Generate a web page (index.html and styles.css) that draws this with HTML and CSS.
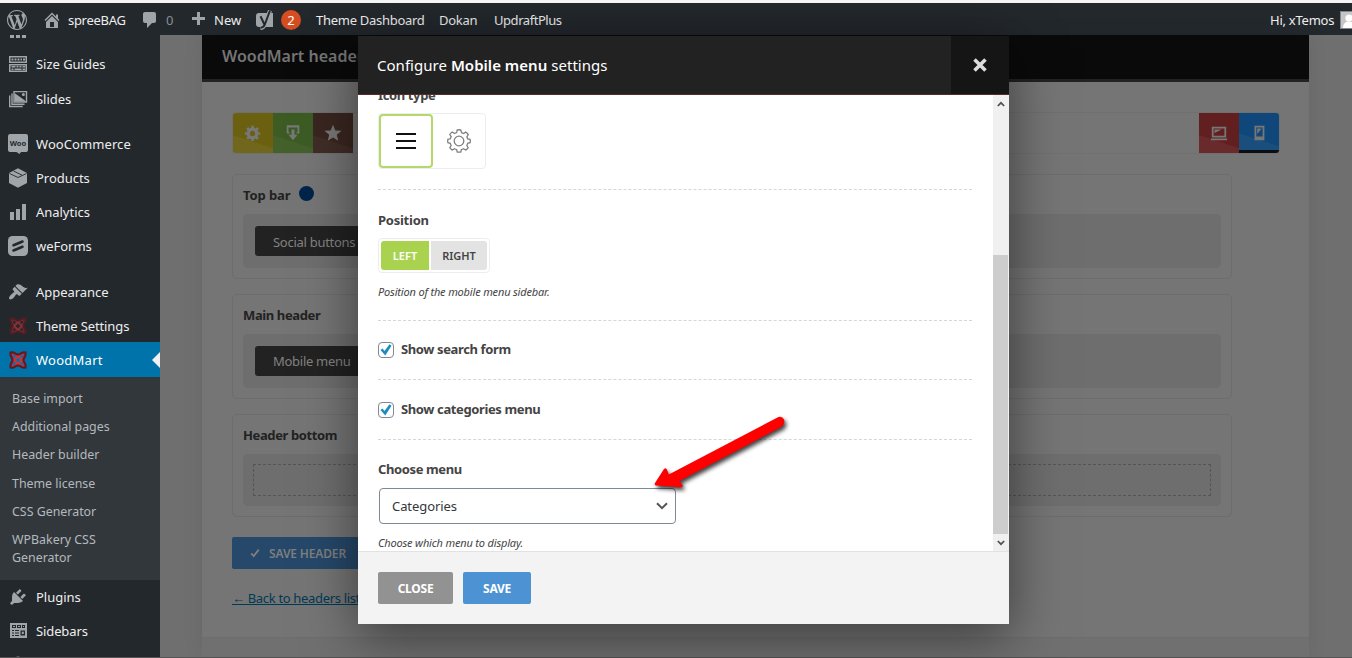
FILE: index.html
```
<!DOCTYPE html>
<html lang="en">
<head>
<meta charset="utf-8">
<title>Header builder</title>
<link rel="stylesheet" href="styles.css">
</head>
<body>
<div class="screen">
  <header class="adminbar">
    <svg class="ab-logo" viewBox="0 0 20 20"><path d="M20 10c0-5.51-4.49-10-10-10C4.48 0 0 4.49 0 10c0 5.52 4.48 10 10 10 5.51 0 10-4.48 10-10zM7.78 15.37L4.37 6.22c.55-.02 1.17-.08 1.17-.08.5-.06.44-1.13-.06-1.11 0 0-1.45.11-2.37.11-.18 0-.37 0-.58-.01C4.12 2.69 6.87 1.11 10 1.11c2.33 0 4.45.87 6.05 2.34-.68-.11-1.65.39-1.65 1.58 0 .74.45 1.36.9 2.1.35.61.55 1.36.55 2.46 0 1.49-1.4 5-1.4 5l-3.03-8.37c.54-.02.82-.17.82-.17.5-.05.44-1.25-.06-1.22 0 0-1.44.12-2.38.12-.87 0-2.33-.12-2.33-.12-.5-.03-.56 1.2-.06 1.22l.92.08 1.26 3.41zM17.41 10c.24-.64.74-1.87.43-4.25.7 1.29 1.05 2.71 1.05 4.25 0 3.29-1.73 6.24-4.4 7.78.97-2.59 1.94-5.2 2.92-7.78zM6.1 18.09C3.12 16.65 1.11 13.53 1.11 10c0-1.3.23-2.48.72-3.59C3.25 10.3 4.67 14.2 6.1 18.09zm4.03-6.63l2.58 6.98c-.86.29-1.76.45-2.71.45-.79 0-1.57-.11-2.29-.33.81-2.38 1.62-4.74 2.42-7.1z"/></svg>
    <div class="ab-item ab-site"><svg viewBox="0 0 20 20"><path d="M16 8.500l1.530 1.530-1.060 1.060L10 4.600l-6.470 6.490-1.060-1.060L10 2.500l4 4v-2h2v4zm-6-2.460l6 5.990V18H4v-5.970zM12 17v-5H8v5h4z"/></svg><span>spreeBAG</span></div>
    <div class="ab-item ab-comments"><svg viewBox="0 0 20 20"><path d="M5 2h9c1.100 0 2 .9 2 2v7c0 1.100-.9 2-2 2h-2l-5 5v-5H5c-1.100 0-2-.9-2-2V4c0-1.100.9-2 2-2z"/></svg><span class="dim">0</span></div>
    <div class="ab-item ab-new"><svg viewBox="0 0 20 20"><path d="M17 7v3h-5v5H9v-5H4V7h5V2h3v5h5z"/></svg><span>New</span></div>
    <div class="ab-item ab-yoast"><svg viewBox="0 0 20 20"><path d="M4 3h14v14H4a3 3 0 0 1-3-3V6a3 3 0 0 1 3-3z"/><path class="halo" d="M15 0.500l-5 13.500c-.9 2.600-2 4-4.500 4"/><path class="y" d="M5.500 6.200l3.800 8M15 .5l-5 13.500c-.9 2.600-2 3.700-4.200 3.700"/></svg><span class="badge">2</span></div>
    <span class="ab-link l1">Theme Dashboard</span>
    <span class="ab-link l2">Dokan</span>
    <span class="ab-link l3">UpdraftPlus</span>
    <div class="ab-user"><span>Hi, xTemos</span><span class="avatar"><svg viewBox="0 0 16 16"><circle cx="8" cy="6" r="3.600"/><path d="M2 16c0-5 3-6.500 6-6.500s6 1.500 6 6.500z"/></svg></span></div>
  </header>

  <div class="layout">
    <nav class="sidebar">
      <div class="dots"><i></i><i></i><i></i></div>
      <a class="item"><svg viewBox="0 0 20 20"><path d="M1 2h18v7H1zM1 10h18v8H1z"/><path class="cut" d="M2.500 3.500h15v4h-15zM2.500 11.500h15v5h-15z"/><path d="M3.500 4.500h2v2h-2zM6.500 4.500h2v2h-2zM9.500 4.500h2v2h-2zM12.500 4.500h1.500v2h-1.500zM15 4.500h2v2h-2zM3.500 12h4v1.500h-4zM8.500 12h2v1.500h-2zM11.500 12h2v1.500h-2zM14.500 12H17v1.500h-2.500zM3.500 14.500h2V16h-2zM6.500 14.500h7V16h-7zM14.500 14.500H17V16h-2.500z"/></svg>Size Guides</a>
      <a class="item tall"><svg viewBox="0 0 20 20"><g class="line"><path d="M6 2.600h12.500V13H6zM4 4.500v10.700h12.500M1.700 6.500v11h13"/></g><circle cx="15.400" cy="5.600" r="1.500"/><path d="M6.500 4l10.500 7.500v1H6.500z"/></svg>Slides</a>
      <a class="item gap11"><svg viewBox="0 0 20 20"><path d="M2 0h16a2 2 0 0 1 2 2v14a2 2 0 0 1-2 2h-5l-1.500 2-3-2H2a2 2 0 0 1-2-2V2a2 2 0 0 1 2-2z"/><text x="10" y="12" text-anchor="middle" class="woo">Woo</text></svg><span class="wide">WooCommerce</span></a>
      <a class="item"><svg viewBox="0 0 20 20"><path d="M10 .3l9 4.700v10L10 19.700 1 15V5z"/><path class="cutline" d="M1.500 5.500L10 9.500l8.500-4M5.500 3L14 7.200"/></svg>Products</a>
      <a class="item"><svg viewBox="0 0 20 20"><path d="M2 10h4v8H2zM8 7h4v11H8zM14 2h4v16h-4z"/></svg>Analytics</a>
      <a class="item"><svg viewBox="0 0 20 20"><rect width="20" height="20" rx="4.500"/><path class="thick" d="M5.500 9.200L14.500 5.500M5.500 14.500l9-3.700"/></svg>weForms</a>
      <a class="item gap12"><svg viewBox="0 0 20 20"><path d="M14.480 11.060L7.410 3.990l1.500-1.500c.5-.56 2.300-.47 3.510.32 1.210.8 1.430 1.280 2.910 2.100 1.180.64 2.450 1.260 4.450.85zm-.71.71L6.700 4.700 4.930 6.470c-.39.39-.39 1.020 0 1.410l1.060 1.060c.39.39.39 1.030 0 1.420-.6.6-1.430 1.110-2.210 1.690-.35.26-.7.53-1.010.84C1.430 14.230.4 16.080 1.400 17.070c.99 1 2.840-.03 4.180-1.360.31-.31.58-.66.85-1.020.57-.78 1.080-1.610 1.690-2.210.39-.39 1.020-.39 1.410 0l1.060 1.060c.39.39 1.020.39 1.410 0z"/></svg>Appearance</a>
      <a class="item short"><svg class="wood faded" viewBox="0 0 20 20"><g class="x"><ellipse cx="10" cy="10" rx="9" ry="2.800" transform="rotate(45 10 10)"/><ellipse cx="10" cy="10" rx="9" ry="2.800" transform="rotate(-45 10 10)"/></g><path d="M2.500 2.500c4-1 4.500 2 7.500 2s3.500-3 7.500-2c1 4-2 4.500-2 7.500s3 3.500 2 7.500c-4 1-4.500-2-7.500-2s-3.500 3-7.500 2c-1-4 2-4.500 2-7.500s-3-3.500-2-7.500z"/></svg><span class="narrow">Theme Settings</span></a>
      <a class="item active"><svg class="wood" viewBox="0 0 20 20"><g class="x"><ellipse cx="10" cy="10" rx="9" ry="2.800" transform="rotate(45 10 10)"/><ellipse cx="10" cy="10" rx="9" ry="2.800" transform="rotate(-45 10 10)"/></g><path d="M2.500 2.500c4-1 4.500 2 7.500 2s3.500-3 7.500-2c1 4-2 4.500-2 7.500s3 3.500 2 7.500c-4 1-4.500-2-7.500-2s-3.500 3-7.500 2c-1-4 2-4.500 2-7.500s-3-3.500-2-7.500z"/></svg><span class="wider">WoodMart</span></a>
      <div class="submenu">
        <a>Base import</a><a>Additional pages</a><a>Header builder</a><a>Theme license</a><a>CSS Generator</a><a>WPBakery CSS Generator</a>
      </div>
      <a class="item"><svg viewBox="0 0 20 20"><path d="M13.110 4.360L9.870 7.600 8 5.730l3.240-3.240c.35-.34 1.050-.2 1.560.32.52.51.66 1.210.31 1.550zm-8 1.770l.91-1.120 9.010 9.010-1.190.84c-.71.71-2.630 1.160-3.820 1.160H6.140L4.900 17.260c-.59.59-1.540.59-2.120 0-.59-.58-.59-1.530 0-2.120l1.240-1.240v-3.880c0-1.130.4-3.190 1.090-3.890zm7.260 3.970l3.240-3.240c.34-.35 1.040-.21 1.550.31.52.51.66 1.210.31 1.550l-3.240 3.250z"/></svg>Plugins</a>
      <a class="item"><svg viewBox="0 0 20 20"><path d="M2 2h17v15H2z"/><path class="cut" d="M4 4h4v3H4zM9 4h4v3H9zM14 4h3v3h-3zM4 9h2v1H4zM7 9h4v1H7zM4 11.500h2v1H4zM7 11.500h4v1H7zM4 14h2v1H4zM7 14h4v1H7zM12.500 9.500H17v5h-4.500z"/><path d="M5 5h2v1H5zM10 5h2v1h-2zM15 5h1v1h-1zM13.800 10.800h2v2.200h-2z"/></svg><span class="narrow">Sidebars</span></a>
      <a class="item"><svg viewBox="0 0 20 20"><circle cx="10" cy="5" r="3.500"/></svg></a>
    </nav>

    <main class="content">
      <section class="panel">
        <h1 class="panel-title">WoodMart header builder</h1>
        <div class="panel-body">
          <div class="toolbar">
            <span class="tool yellow"><svg viewBox="0 0 20 20"><path d="M18 12h-2.180c-.17.7-.44 1.350-.81 1.930l1.540 1.540-2.100 2.100-1.540-1.540c-.58.36-1.230.63-1.910.79V19H8v-2.180c-.68-.16-1.330-.43-1.910-.79l-1.540 1.540-2.120-2.120 1.540-1.540c-.36-.58-.63-1.230-.79-1.910H1V9.030h2.170c.16-.7.44-1.350.8-1.940L2.430 5.550l2.100-2.100 1.540 1.540c.58-.37 1.240-.64 1.930-.81V2h3v2.180c.68.16 1.330.43 1.910.79l1.540-1.540 2.120 2.120-1.540 1.540c.36.59.64 1.240.8 1.940H18V12zm-8.500 1.500c1.660 0 3-1.340 3-3s-1.340-3-3-3-3 1.340-3 3 1.340 3 3 3z"/></svg></span>
            <span class="tool green"><svg viewBox="0 0 20 20"><path d="M3 1.500h14v9h-3V9h1V4H5v5h1v1.500H3zM8.300 6h3.400v6H15l-5 6-5-6h3.300z"/></svg></span>
            <span class="tool brown"><svg viewBox="0 0 20 20"><path d="M10 .8l2.600 6.300 6.900.5-5.300 4.300 1.700 6.700-5.900-3.700-5.900 3.700 1.700-6.700L.5 7.600l6.900-.5z"/></svg></span>
            <span class="tool red"><svg viewBox="0 0 20 20"><path fill-rule="evenodd" d="M2 3h16v12H2zm2 2v8h12V5zM1 16h18v2H1z"/><path d="M5 6h8l-8 4z"/></svg></span>
            <span class="tool blue"><svg viewBox="0 0 20 20"><path fill-rule="evenodd" d="M5 2h11v16H5zm2 2v10h7V4z"/><path d="M8 5h5l-5 6z"/></svg></span>
          </div>
          <div class="rows">
            <div class="row"><h2>Top bar<i class="dot"></i></h2><div class="slot"><span class="chip low">Social buttons</span></div></div>
            <div class="row"><h2>Main header</h2><div class="slot"><span class="chip">Mobile menu</span></div></div>
            <div class="row"><h2>Header bottom</h2><div class="slot last"><div class="drop"></div></div></div>
          </div>
          <div class="save-header"><svg viewBox="0 0 12 12"><path d="M1.500 6.500l3 3.200L10.500 2"/></svg>SAVE HEADER</div>
          <a class="back">← Back to headers list</a>
        </div>
        <div class="panel-foot"></div>
      </section>
    </main>
  </div>
  <div class="edge"></div>

  <section class="modal">
    <header class="modal-head"><h3>Configure <b>Mobile menu</b> settings</h3><span class="modal-x"><svg viewBox="0 0 14 14"><path d="M1.500 1.500l11 11M12.500 1.500l-11 11"/></svg></span></header>
    <div class="modal-body">
      <div class="fields">
        <div class="field f-icon"><h4>Icon type</h4>
          <div class="icons">
            <span class="ic on"><svg viewBox="0 0 20 20"><path d="M0 3h20M0 10h20M0 17h20"/></svg></span>
            <span class="ic"><svg class="gear" viewBox="0 0 24 24"><circle cx="12" cy="12" r="4.800"/><path d="M10.200 1q1.800-.5 3.600 0l.7 2.600q1.200.5 2 .9l2.300-1.400q1.600.9 2.500 2.500l-1.400 2.200q.6 1 .8 2.100l2.400.4q.4 1.700 0 3.400l-2.400.6q-.3 1.200-.9 2.200l1.400 2.200q-1 1.500-2.500 2.400l-2.200-1.400q-1.100.6-2.100.9l-.6 2.400q-1.800.4-3.600 0l-.6-2.400q-1.200-.3-2.100-.9l-2.200 1.400q-1.500-.9-2.500-2.400l1.400-2.200q-.6-1-.9-2.200L.9 13.700q-.4-1.700 0-3.400l2.400-.5q.3-1.200.9-2.200L2.800 5.500q.9-1.500 2.500-2.500l2.200 1.500q1-.6 2.100-.9z"/></svg></span>
          </div>
        </div>
        <div class="field f-pos"><h4>Position</h4>
          <div class="switch"><span class="on">LEFT</span><span>RIGHT</span></div>
          <p class="hint">Position of the mobile menu sidebar.</p>
        </div>
        <div class="field f-check"><span class="box"><svg viewBox="0 0 12 12"><path d="M.5 6l2-1.500 2 2.500L9.500.2l2 1.500-6.200 9.800z"/></svg></span><h4>Show search form</h4></div>
        <div class="field f-check second"><span class="box"><svg viewBox="0 0 12 12"><path d="M.5 6l2-1.500 2 2.500L9.500.2l2 1.500-6.200 9.800z"/></svg></span><h4>Show categories menu</h4></div>
        <div class="field f-menu"><h4>Choose menu</h4>
          <div class="select"><span>Categories</span><svg viewBox="0 0 12 8"><path d="M1 1.200l5 5 5-5"/></svg></div>
          <p class="hint">Choose which menu to display.</p>
        </div>
      </div>
      <div class="scrollbar"><svg viewBox="0 0 8 6"><path d="M.8 5L4 1.800 7.200 5"/></svg><div class="thumb"></div><svg viewBox="0 0 8 6"><path d="M.8 1L4 4.200 7.200 1"/></svg></div>
    </div>
    <footer class="modal-foot"><span class="btn grey">CLOSE</span><span class="btn">SAVE</span></footer>
  </section>

  <svg class="arrow" viewBox="0 0 150 90"><path d="M129.500 6q4-1 5.500 2.500t-2 7L30.500 70l3 4q1 2.500-2 2.200L7 74.500q-2-.5-1-2.500l9-14q2-2 3.200 1l1.600 4.500z"/></svg>
</div>
</body>
</html>
```
FILE: styles.css
```
* { box-sizing: border-box; }
body, h1, h2, h3, h4, p { margin: 0; }
body { font-family: "Noto Sans", "Open Sans", sans-serif; font-size: 13px; overflow: hidden; background: #6f6f6f; }
.screen { position: relative; width: 1352px; height: 658px; overflow: hidden; border-top: 3px solid #f4f4f4; }
svg { display: block; flex: none; }

/* admin bar */
.adminbar { height: 32px; background: #23282d; display: flex; align-items: center; color: #eee; padding-left: 7px; padding-top: 2px; white-space: nowrap; }
.adminbar svg { fill: #a0a5aa; width: 20px; height: 20px; }
.ab-item { display: flex; align-items: center; }
.ab-site { margin-left: 15px; gap: 6px; width: 98px; letter-spacing: -.3px; }
.ab-comments { gap: 6px; width: 48px; }
.ab-new { gap: 6px; width: 67px; }
.ab-yoast { gap: 6px; width: 61px; }
.adminbar .y { fill: none; stroke: #23282d; stroke-width: 2; }
.adminbar .halo { fill: none; stroke: #a0a5aa; stroke-width: 4; }
.sidebar .cut { fill: #23282d; }
.dim { color: #888d92; }
.badge { width: 20px; height: 20px; border-radius: 50%; background: #d54e21; color: #fff; text-align: center; line-height: 20px; }
.l1 { width: 123px; letter-spacing: -.28px; }
.l2 { width: 55px; letter-spacing: -.3px; }
.l3 { letter-spacing: -.45px; }
.ab-user { margin-left: auto; width: 82px; display: flex; align-items: center; justify-content: space-between; letter-spacing: -.25px; }
.avatar { width: 12px; height: 18px; overflow: hidden; background: #c6c6c6; border: 1px solid #82878c; border-right: 0; }
.adminbar .avatar svg { fill: #fff; width: 16px; height: 16px; }

.layout { display: flex; height: 622px; }

/* sidebar */
.sidebar { width: 160px; background: #23282d; overflow: hidden; flex: none; }
.dots { height: 12px; display: flex; gap: 2px; padding-left: 10px; }
.dots i { width: 4px; height: 3px; background: #a0a5aa; }
.item { height: 34px; display: flex; align-items: center; gap: 8px; padding-left: 8px; color: #eee; letter-spacing: -.03px; }
.wide { letter-spacing: .08px; }
.wider { letter-spacing: .25px; }
.narrow { letter-spacing: -.12px; }
.item svg { width: 20px; height: 20px; fill: #a0a5aa; }
.tall { height: 35px; }
.short { height: 33px; }
.gap11 { margin-top: 11px; }
.gap12 { margin-top: 12px; }
.line, .cutline, .thick { fill: none; stroke: #a0a5aa; stroke-width: 1.4; }
.cutline { stroke: #23282d; stroke-width: .9; }
.thick { stroke: #23282d; stroke-width: 2.6; stroke-linecap: round; }
.woo { font-size: 7.500px; font-weight: 700; fill: #23282d; }
.active { height: 35px; background: #0073aa; color: #fff; }
.active::after { content: ""; margin-left: auto; border: 8px solid transparent; border-right-color: #f1f1f1; border-left: 0; }
.item .wood { fill: none; stroke: #64191e; stroke-width: 2.2; }
.wood .x { stroke: #cb333a; stroke-width: 2.2; }
.faded { opacity: .6; }
.submenu { background: #32373c; height: 203px; padding: 8px 12px 0; color: #b4b9be; line-height: 18.200px; font-size: 12.400px; }
.submenu a { display: block; padding: 5px 30px 5px 0; white-space: nowrap; }
.submenu a:nth-child(6) { white-space: normal; }

/* builder page */
.content { flex: 1; background: #6f6f6f; padding: 0 43px 0 42px; }
.panel { background: #757575; height: 622px; box-shadow: 0 0 20px rgba(0,0,0,.07); display: flex; flex-direction: column; }
.panel-title { height: 47px; background: #0a0a0a; border-bottom: 3px solid #222; color: #757575; font-size: 16px; font-weight: 600; line-height: 43px; padding-left: 20px; }
.panel-body { padding: 31px 30px 0; height: 555px; }
.toolbar { display: flex; height: 40px; width: 1046px; margin-left: 1px; box-shadow: 0 0 0 1px #707070; border-radius: 3px; overflow: hidden; }
.tool { width: 40px; height: 40px; display: grid; place-items: center; }
.tool svg { width: 18px; height: 18px; fill: #777; }
.yellow { background: linear-gradient(198deg, #6b6010 66%, #70661c 67%); }
.green { background: linear-gradient(198deg, #3d5c24 66%, #44612c 67%); }
.brown { background: linear-gradient(198deg, #3a2620 66%, #402d27 67%); }
.red { background: linear-gradient(198deg, #621f20 66%, #682a2b 67%); margin-left: auto; }
.blue { background: linear-gradient(198deg, #10477a 66%, #194e7d 67%); border-bottom: 3px solid #0b0f14; padding-top: 3px; }
.rows { display: grid; gap: 15px; margin-top: 21px; width: 1000px; }
.row { border: 1px solid #6d6d6d; border-radius: 5px; padding: 10px; height: 105px; }
.row:nth-child(3) { height: 103px; }
.row h2 { font-size: 13px; font-weight: 700; line-height: 20px; color: #222; height: 29px; display: flex; letter-spacing: -.38px; }
.row:nth-child(1) h2 { letter-spacing: -.1px; }
.dot { width: 15px; height: 15px; border-radius: 50%; background: #00244a; margin: 1px 0 0 9px; }
.slot { background: #6e6e6e; border-radius: 5px; height: 54px; padding: 12px; }
.chip { display: block; background: #222; color: #828282; border-radius: 3px; width: 150px; height: 30px; line-height: 31px; padding-left: 18px; letter-spacing: -.28px; }
.chip.low { line-height: 33px; }
.slot.last { height: 52px; padding: 10px; }
.drop { height: 32px; border: 1px dashed #555; }
.save-header { margin-top: 20px; width: 180px; height: 32px; background: #26486a; color: #7d7f81; border-radius: 2px; display: flex; align-items: center; gap: 9px; padding-left: 18px; font-size: 12px; font-weight: 600; letter-spacing: -.15px; }
.save-header svg { width: 10px; height: 10px; fill: none; stroke: #7d7f81; stroke-width: 2.200; }
.back { display: block; width: max-content; margin-top: 20px; color: #003a55; text-decoration: underline; letter-spacing: -.33px; }
.panel-foot { height: 20px; background: #707070; border-top: 1px solid #6d6d6d; }
.edge { height: 1px; background: #555; }

/* settings dialog */
.modal { position: absolute; left: 358px; top: 33px; width: 651px; height: 588px; background: #fff; box-shadow: 0 12px 50px rgba(0,0,0,.5); display: flex; flex-direction: column; color: #444; }
.modal-head { height: 59px; background: #222; border-bottom: 1px solid #5b2b2b; display: flex; color: #fff; }
.modal-head h3 { flex: 1; font-size: 15px; font-weight: 400; line-height: 58px; padding-left: 19px; letter-spacing: .03px; }
.modal-head b { font-weight: 600; }
.modal-x { width: 58px; background: #151515; display: grid; place-items: center; padding-right: 1px; }
.modal-x svg { width: 14px; height: 14px; fill: none; stroke: #ddd; stroke-width: 3.600; }
.modal-body { height: 456px; display: flex; overflow: hidden; }
.fields { width: 635px; padding: 0 21px 0 20px; }
.field { height: 131px; border-bottom: 1px dashed #d6d6d6; }
h4 { font-size: 13px; font-weight: 700; line-height: 20px; letter-spacing: -.38px; }
.f-icon { height: 105px; margin-top: -10px; }
.icons { margin-top: 8px; display: flex; width: 108px; height: 56px; border: 1px solid #ededed; border-radius: 4px; }
.ic { width: 51px; height: 54px; display: grid; place-items: center; }
.ic.on { width: 54px; border: 2px solid #b5d86a; border-radius: 4px; }
.ic svg { width: 20px; height: 20px; fill: none; stroke: #111; stroke-width: 2; }
.ic svg.gear { width: 24px; height: 24px; stroke: #808080; stroke-width: 1.300; }
.f-pos { padding-top: 20px; }
.f-pos h4 { letter-spacing: -.25px; }
.switch { margin-top: 8px; display: flex; gap: 2px; width: 112px; height: 35px; border: 1px solid #ededed; border-radius: 4px; padding: 2px; font-size: 11px; font-weight: 600; line-height: 29px; text-align: center; }
.switch span { width: 56px; background: #e3e3e3; border-radius: 0 3px 3px 0; }
.switch .on { width: 48px; background: #a9d34f; color: #fff; border-radius: 3px 0 0 3px; }
.hint { font-size: 11px; font-style: italic; line-height: 16px; margin-top: 11px; letter-spacing: -.17px; }
.f-check { height: 59px; display: flex; gap: 7px; padding-top: 18px; }
.second { height: 60px; padding-top: 19px; }
.box { width: 16px; height: 16px; margin-top: 3px; border: 1px solid #7e8993; border-radius: 4px; display: grid; place-items: center; }
.box svg { width: 12px; height: 12px; fill: #1e8cbe; }
.f-menu { padding-top: 19px; border: 0; }
.select { width: 297px; height: 36px; margin: 9px 0 0 1px; border: 1px solid #7e8993; border-radius: 4px; padding: 0 7px 0 12px; display: flex; align-items: center; justify-content: space-between; color: #32373c; letter-spacing: -.07px; }
.select svg { width: 12px; height: 8px; fill: none; stroke: #555; stroke-width: 2; }
.scrollbar { width: 16px; background: #f0f0f0; display: flex; flex-direction: column; align-items: center; padding: 6px 0 5px; }
.scrollbar svg { width: 8px; height: 6px; fill: none; stroke: #505050; stroke-width: 1.700; }
.thumb { width: 15px; height: 279px; flex: none; margin: 148px 1px 6px 0; background: #cdcdcd; }
.modal-foot { flex: 1; background: #f3f3f3; border-top: 1px solid #e2e2e2; display: flex; gap: 10px; padding: 20px 0 0 20px; }
.btn { width: 68px; height: 32px; border-radius: 2px; background: #4d93d3; color: #fff; font-size: 12px; font-weight: 700; line-height: 33px; text-align: center; letter-spacing: -.25px; }
.grey { width: 75px; background: #929292; }
.arrow { position: absolute; left: 649px; top: 408px; width: 150px; height: 90px; fill: #f00; filter: drop-shadow(2px 3px 2px rgba(0,0,0,.75)); }
```
